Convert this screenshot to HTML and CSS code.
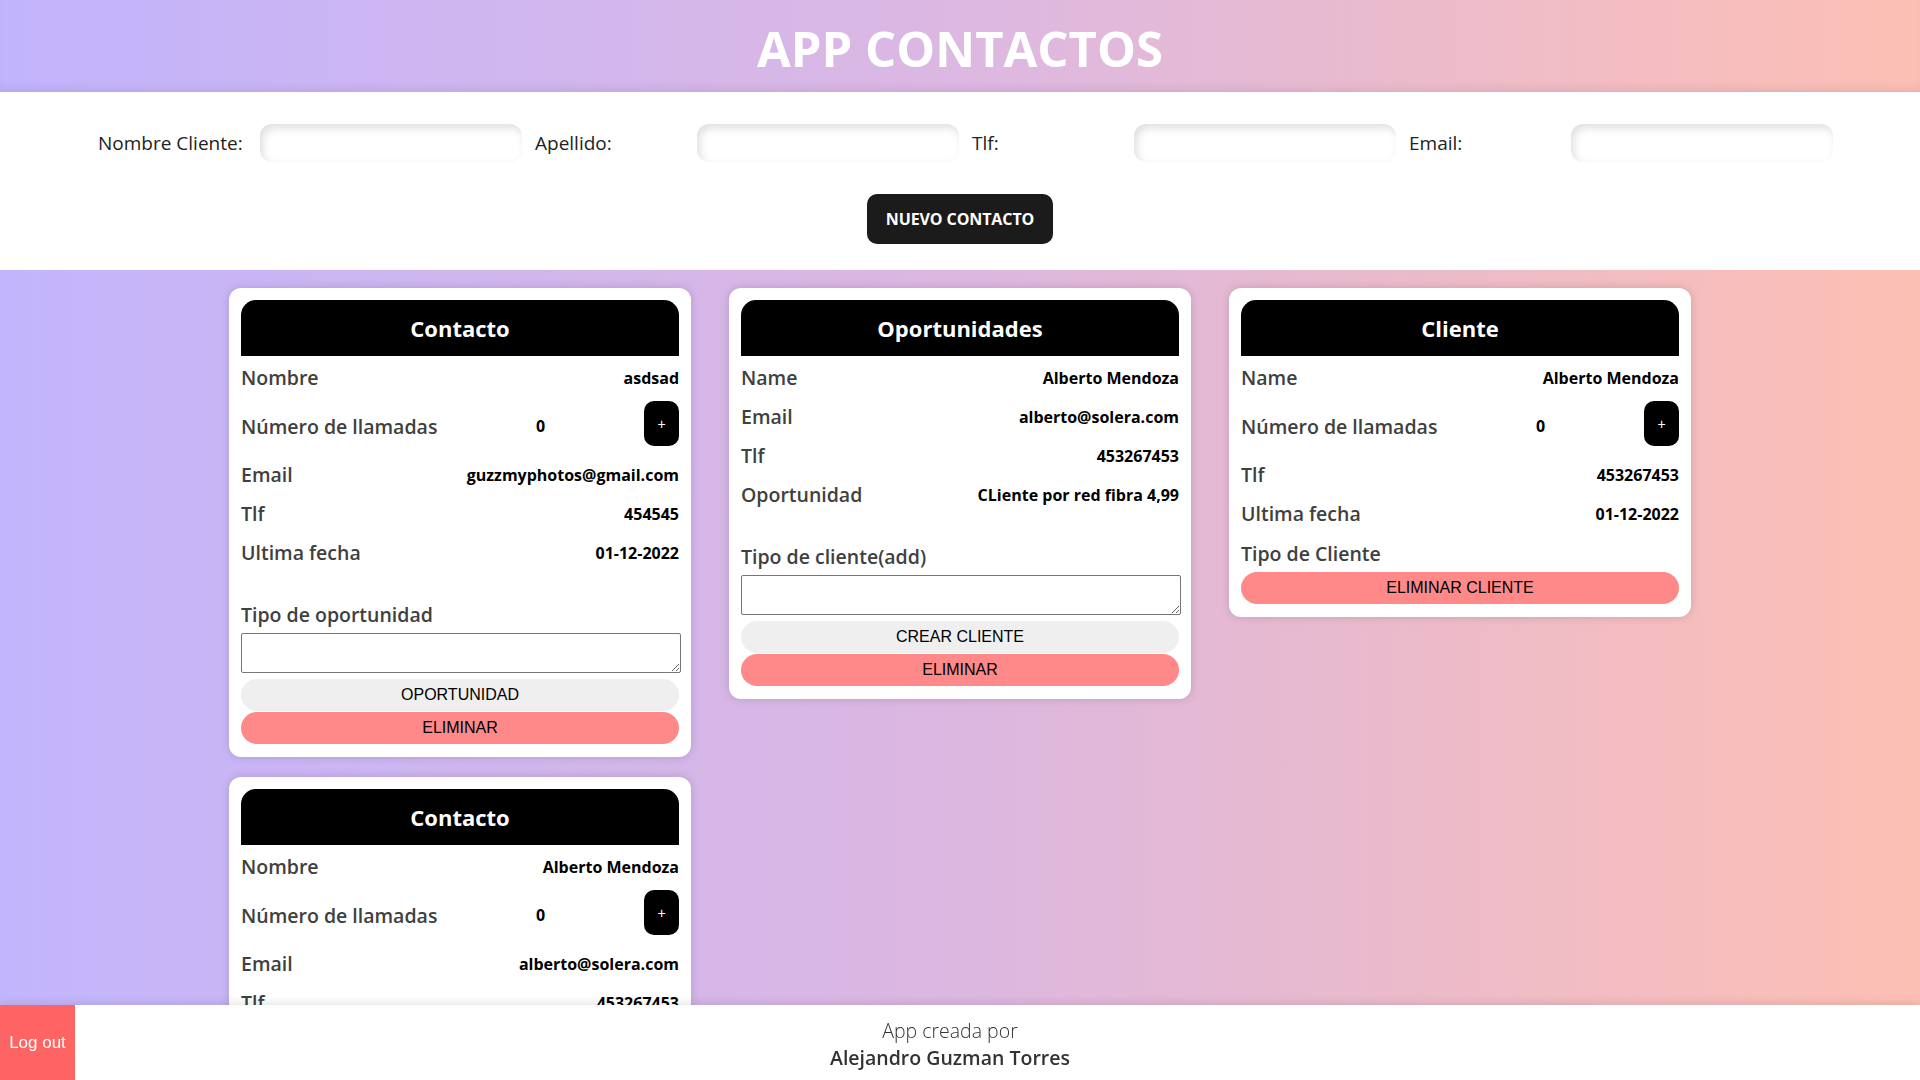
FILE: index.html
```html
<!DOCTYPE html>
<html lang="es">
<head>
  <meta charset="UTF-8" />
  <meta name="viewport" content="width=device-width, initial-scale=1.0" />
  <title>App Contactos</title>
  <link rel="stylesheet" href="styles.css">
</head>
<body>
  <header class="top">
    <h1>APP CONTACTOS</h1>
  </header>

  <section class="new-contact">
    <div class="fields">
      <label for="nombre">Nombre Cliente:</label>
      <input type="text" id="nombre" />
      <label for="apellido">Apellido:</label>
      <input type="text" id="apellido" />
      <label for="tlf">Tlf:</label>
      <input type="text" id="tlf" />
      <label for="email">Email:</label>
      <input type="text" id="email" />
    </div>
    <button class="btn-new">NUEVO CONTACTO</button>
  </section>

  <main class="board">
    <div class="card">
      <div class="card-head">Contacto</div>
      <div class="row first"><span class="key">Nombre</span><span class="val">asdsad</span></div>
      <div class="row calls"><span class="key">Número de llamadas</span><span class="val">0</span><button class="plus">+</button></div>
      <div class="row"><span class="key">Email</span><span class="val">guzzmyphotos@gmail.com</span></div>
      <div class="row"><span class="key">Tlf</span><span class="val">454545</span></div>
      <div class="row"><span class="key">Ultima fecha</span><span class="val">01-12-2022</span></div>
      <div class="sub spaced">Tipo de oportunidad</div>
      <textarea></textarea>
      <button class="btn light">OPORTUNIDAD</button>
      <button class="btn danger">ELIMINAR</button>
    </div>

    <div class="card">
      <div class="card-head">Oportunidades</div>
      <div class="row first"><span class="key">Name</span><span class="val">Alberto Mendoza</span></div>
      <div class="row"><span class="key">Email</span><span class="val">alberto@solera.com</span></div>
      <div class="row"><span class="key">Tlf</span><span class="val">453267453</span></div>
      <div class="row"><span class="key">Oportunidad</span><span class="val">CLiente por red fibra 4,99</span></div>
      <div class="sub spaced">Tipo de cliente(add)</div>
      <textarea></textarea>
      <button class="btn light">CREAR CLIENTE</button>
      <button class="btn danger">ELIMINAR</button>
    </div>

    <div class="card">
      <div class="card-head">Cliente</div>
      <div class="row first"><span class="key">Name</span><span class="val">Alberto Mendoza</span></div>
      <div class="row calls"><span class="key">Número de llamadas</span><span class="val">0</span><button class="plus">+</button></div>
      <div class="row"><span class="key">Tlf</span><span class="val">453267453</span></div>
      <div class="row"><span class="key">Ultima fecha</span><span class="val">01-12-2022</span></div>
      <div class="sub">Tipo de Cliente</div>
      <button class="btn danger">ELIMINAR CLIENTE</button>
    </div>

    <div class="card">
      <div class="card-head">Contacto</div>
      <div class="row first"><span class="key">Nombre</span><span class="val">Alberto Mendoza</span></div>
      <div class="row calls"><span class="key">Número de llamadas</span><span class="val">0</span><button class="plus">+</button></div>
      <div class="row"><span class="key">Email</span><span class="val">alberto@solera.com</span></div>
      <div class="row"><span class="key">Tlf</span><span class="val">453267453</span></div>
      <div class="row"><span class="key">Ultima fecha</span><span class="val">01-12-2022</span></div>
      <div class="sub spaced">Tipo de oportunidad</div>
      <textarea></textarea>
      <button class="btn light">OPORTUNIDAD</button>
      <button class="btn danger">ELIMINAR</button>
    </div>
  </main>

  <footer class="foot">
    <button class="logout">Log out</button>
    <p class="made">App creada por</p>
    <p class="author">Alejandro Guzman Torres</p>
  </footer>
</body>
</html>
```

FILE: styles.css
```css
html {
  overflow-x: hidden;
}
body {
  margin: 0;
  width: 100vw;
  min-height: 100vh;
  font-family: "Open Sans", "Noto Sans", sans-serif;
  background: linear-gradient(to right, #c3b5fd, #dcb7e0 50%, #fdbfb3);
  background-attachment: fixed;
}
.top {
  height: 92px;
  background: linear-gradient(to right, #c2b4fd, #dcb8e2 50%, #fdbfb4);
  box-shadow: inset 0 -8px 8px -4px rgba(0, 0, 0, 0.07);
  text-align: center;
}
.top h1 {
  margin: 0;
  line-height: 96px;
  font-size: 49px;
  font-weight: 700;
  color: white;
}
.new-contact {
  background-color: white;
  padding: 32px 0 26px;
  text-align: center;
}
.fields {
  display: grid;
  grid-template-columns: repeat(4, 149px 262px);
  column-gap: 13px;
  align-items: center;
  padding-left: 98px;
  text-align: left;
}
.fields label {
  font-size: 19px;
  color: #222;
}
.fields input {
  height: 38px;
  border: none;
  border-radius: 12px;
  box-shadow: inset 3px 4px 8px rgba(0, 0, 0, 0.13);
  padding: 0 10px;
  font-size: 16px;
  box-sizing: border-box;
}
.btn-new {
  margin-top: 32px;
  width: 186px;
  height: 50px;
  background-color: #1b1b1b;
  color: white;
  border: none;
  border-radius: 10px;
  font-family: "Open Sans", sans-serif;
  font-weight: 700;
  font-size: 16px;
  letter-spacing: -0.1px;
  cursor: pointer;
}
.board {
  display: grid;
  grid-template-columns: repeat(3, 462px);
  column-gap: 38px;
  row-gap: 20px;
  justify-content: center;
  align-items: start;
  padding: 18px 0 120px;
}
.card {
  background-color: white;
  border-radius: 12px;
  padding: 12px 12px 13px;
  box-shadow: 0 0 10px rgba(0, 0, 0, 0.15);
}
.card-head {
  height: 56px;
  line-height: 56px;
  background-color: black;
  color: white;
  border-radius: 15px 15px 0 0;
  text-align: center;
  font-size: 22px;
  font-weight: 700;
}
.row {
  display: flex;
  justify-content: space-between;
  align-items: center;
  height: 39px;
}
.row.first {
  margin-top: 2px;
}
.row.calls {
  height: 58px;
}
.key, .sub {
  font-size: 19.5px;
  font-weight: 600;
  color: #404040;
}
.val {
  font-size: 16px;
  font-weight: 700;
  color: black;
}
.plus {
  width: 35px;
  height: 45px;
  margin-bottom: 5px;
  background-color: black;
  color: white;
  border: none;
  border-radius: 10px;
  font-size: 14px;
  cursor: pointer;
}
.sub {
  line-height: 26px;
  margin: 8px 0 5px;
}
.sub.spaced {
  margin-top: 30px;
}
textarea {
  display: block;
  width: 100%;
  height: 38px;
  padding: 0;
  margin: 0 0 6px;
  border: 1px solid #767676;
  border-radius: 2px;
  box-sizing: content-box;
}
.btn {
  display: block;
  width: 100%;
  height: 32px;
  border: none;
  border-radius: 16px;
  font-family: "Liberation Sans", Arial, sans-serif;
  font-size: 16px;
  color: black;
  cursor: pointer;
}
.btn + .btn {
  margin-top: 1px;
}
.btn.light {
  background-color: #efefef;
}
.btn.danger {
  background-color: #ff8888;
}
.foot {
  position: fixed;
  left: 0;
  right: 0;
  bottom: 0;
  height: 75px;
  padding-right: 20px;
  background-color: white;
  box-shadow: 0 0 10px rgba(0, 0, 0, 0.15);
  text-align: center;
}
.foot p {
  margin: 0;
  font-size: 19.5px;
  line-height: 27px;
  color: #333;
}
.made {
  padding-top: 12px;
  font-weight: 300;
}
.author {
  font-weight: 600;
  color: black;
}
.logout {
  position: absolute;
  left: 0;
  top: 0;
  width: 75px;
  height: 75px;
  background-color: #ff6464;
  color: white;
  border: none;
  font-family: "Liberation Sans", Arial, sans-serif;
  font-size: 17px;
  cursor: pointer;
}
```
